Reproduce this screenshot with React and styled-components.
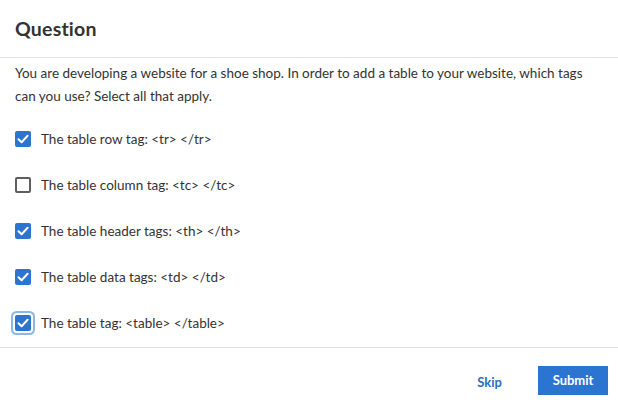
import React from 'react'
import styled, { createGlobalStyle } from 'styled-components'

const Global = createGlobalStyle`
  html, body {
    margin: 0;
    padding: 0;
    background: #fff;
  }
  body {
    font-family: "Lato", "Liberation Sans", sans-serif;
    color: #333;
  }
`

const Dialog = styled.div`
  width: 618px;
  height: 416px;
  display: flex;
  flex-direction: column;
  background: #fff;
`

const Header = styled.div`
  height: 58px;
  box-sizing: border-box;
  padding: 0 15px;
  display: flex;
  align-items: center;
  border-bottom: 1px solid #e3e3e3;
`

const Title = styled.h1`
  margin: 0;
  font-size: 19.5px;
  font-weight: 700;
  color: #333;
  letter-spacing: 0.2px;
`

const Body = styled.div`
  padding: 4px 15px 0;
  flex: 1;
`

const Prompt = styled.p`
  margin: 0 0 8px;
  font-size: 13.5px;
  line-height: 23px;
  color: #333;
`

const Options = styled.ul`
  list-style: none;
  margin: 0;
  padding: 0;
`

const Option = styled.li`
  height: 46px;
  display: flex;
  align-items: center;
  gap: 10px;
  font-size: 13.5px;
  color: #333;
`

const Box = styled.span`
  width: 16px;
  height: 16px;
  box-sizing: border-box;
  border-radius: 2px;
  display: flex;
  align-items: center;
  justify-content: center;
  flex: none;
  background: ${p => (p.$checked ? '#2b74d0' : '#fff')};
  border: ${p => (p.$checked ? 'none' : '2px solid #5f5f5f')};
  box-shadow: ${p => (p.$focused ? '0 0 0 2px #fff, 0 0 0 4px #8db6ea' : 'none')};
`

const Footer = styled.div`
  height: 69px;
  box-sizing: border-box;
  border-top: 1px solid #e3e3e3;
  display: flex;
  align-items: center;
  justify-content: flex-end;
  gap: 36px;
  padding: 0 10px 4px 0;
`

const LinkButton = styled.button`
  border: none;
  background: none;
  font-family: inherit;
  font-size: 13px;
  font-weight: 700;
  color: #2a6fc4;
  padding: 0;
  margin-top: 4px;
  cursor: pointer;
`

const PrimaryButton = styled.button`
  width: 70px;
  height: 29px;
  border: none;
  background: #2b74d0;
  color: #fff;
  font-family: inherit;
  font-size: 13px;
  font-weight: 700;
  cursor: pointer;
`

const Check = () => (
  <svg width="12" height="10" viewBox="0 0 12 10">
    <path d="M1.5 5.2 L4.6 8.2 L10.6 1.8" fill="none" stroke="#fff" strokeWidth="2" strokeLinecap="round" strokeLinejoin="round" />
  </svg>
)

const options = [
  { label: 'The table row tag: <tr> </tr>', checked: true },
  { label: 'The table column tag: <tc> </tc>', checked: false },
  { label: 'The table header tags: <th> </th>', checked: true },
  { label: 'The table data tags: <td> </td>', checked: true },
  { label: 'The table tag: <table> </table>', checked: true, focused: true },
]

const App = () => (
  <Dialog>
    <Global />
    <Header>
      <Title>Question</Title>
    </Header>
    <Body>
      <Prompt>
        You are developing a website for a shoe shop. In order to add a table to your website, which tags
        can you use? Select all that apply.
      </Prompt>
      <Options>
        {options.map(o => (
          <Option key={o.label}>
            <Box $checked={o.checked} $focused={o.focused}>{o.checked && <Check />}</Box>
            {o.label}
          </Option>
        ))}
      </Options>
    </Body>
    <Footer>
      <LinkButton>Skip</LinkButton>
      <PrimaryButton>Submit</PrimaryButton>
    </Footer>
  </Dialog>
)

export default App
